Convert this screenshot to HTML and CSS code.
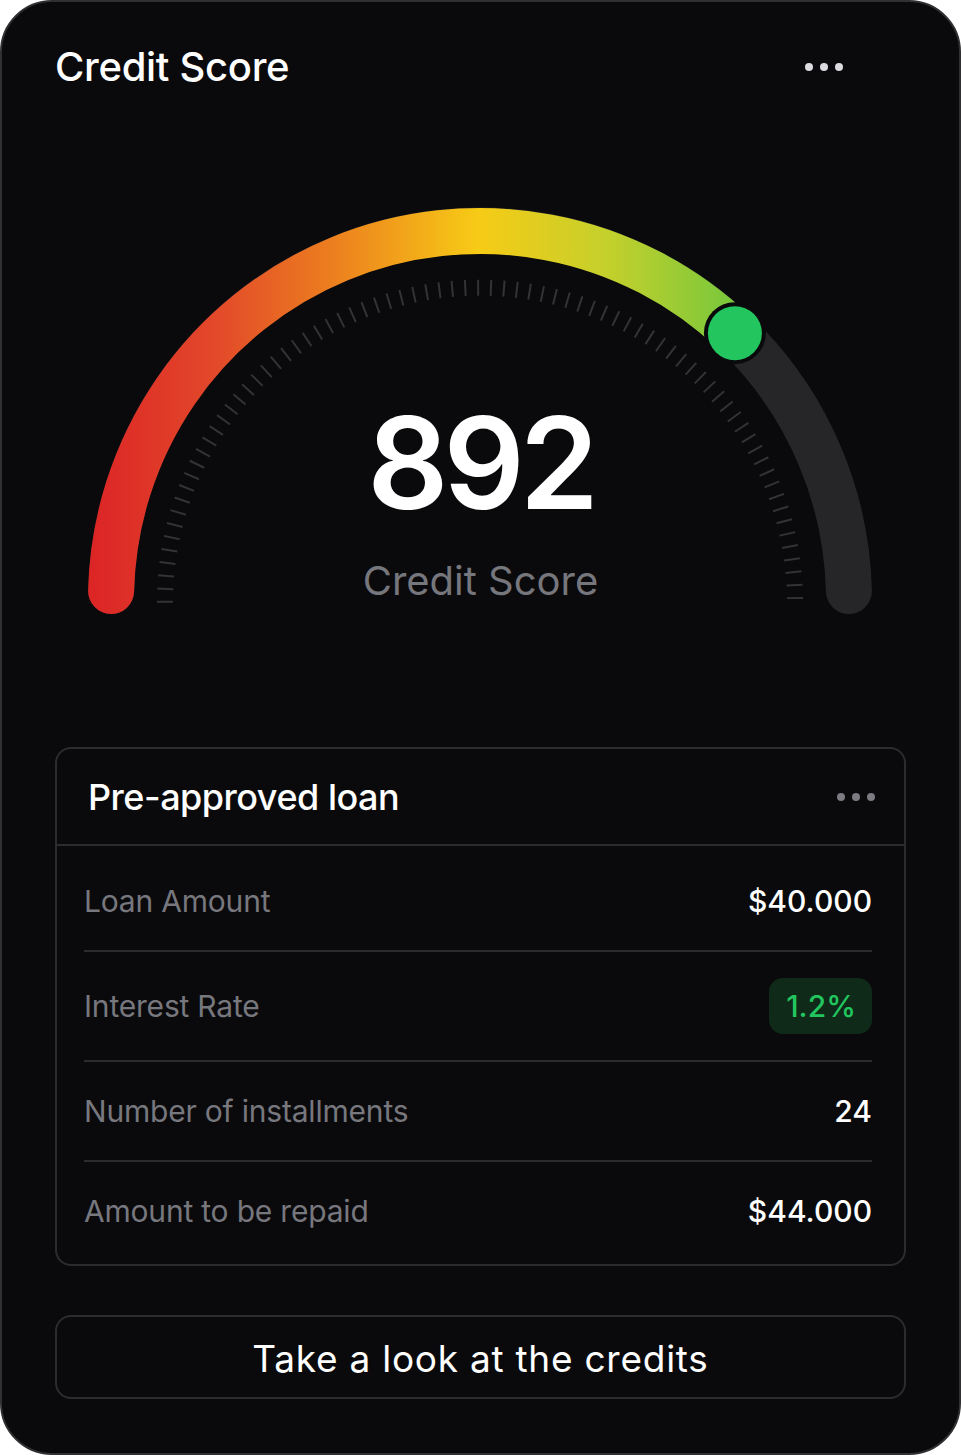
FILE: index.html
```html
<!DOCTYPE html>
<html lang="en">
<head>
<meta charset="utf-8">
<title>Credit Score</title>
<link rel="stylesheet" href="styles.css">
</head>
<body>
<main class="card">
  <header class="card-header">
    <h1 class="title">Credit Score</h1>
    <div class="dots dots-light" aria-label="More"><span></span><span></span><span></span></div>
  </header>

  <section class="gauge">
    <svg class="gauge-svg" width="851" height="460" viewBox="0 0 851 460" aria-hidden="true">
      <defs>
        <linearGradient id="scoreGrad" gradientUnits="userSpaceOnUse" x1="40" y1="0" x2="700" y2="0">
          <stop offset="0" stop-color="#dc2626"/>
          <stop offset="0.18" stop-color="#e2482a"/>
          <stop offset="0.36" stop-color="#ec7f1e"/>
          <stop offset="0.58" stop-color="#f7cb16"/>
          <stop offset="0.78" stop-color="#c3d02c"/>
          <stop offset="1" stop-color="#6cc63e"/>
        </linearGradient>
      </defs>
      <path class="ticks" d="M 110 421.7 A 315 315 0 0 1 740 421.7"/>
      <path class="track" d="M 56.1 410 A 369 369 0 0 1 793.9 410"/>
      <path class="progress" d="M 56.1 410 A 369 369 0 0 1 679.9 152.2"/>
      <circle cx="679.9" cy="152.2" r="31" fill="#0a0a0c"/>
      <circle cx="679.9" cy="152.2" r="27" fill="#22c55e"/>
    </svg>
    <div class="score">
      <div class="score-value">892</div>
      <div class="score-label">Credit Score</div>
    </div>
  </section>

  <section class="loan">
    <div class="loan-header">
      <h2 class="loan-title">Pre-approved loan</h2>
      <div class="dots dots-muted" aria-label="More"><span></span><span></span><span></span></div>
    </div>
    <div class="loan-rows">
      <div class="row row-first">
        <span class="row-label">Loan Amount</span>
        <span class="row-value">$40.000</span>
      </div>
      <div class="row row-badge">
        <span class="row-label">Interest Rate</span>
        <span class="badge">1.2%</span>
      </div>
      <div class="row row-third">
        <span class="row-label">Number of installments</span>
        <span class="row-value">24</span>
      </div>
      <div class="row row-last">
        <span class="row-label">Amount to be repaid</span>
        <span class="row-value">$44.000</span>
      </div>
    </div>
  </section>

  <button class="cta" type="button">Take a look at the credits</button>
</main>
</body>
</html>
```

FILE: styles.css
```css
* { box-sizing: border-box; }

html, body {
  margin: 0;
  padding: 0;
  background: #ffffff;
}

body {
  font-family: Inter, "Noto Sans", "Liberation Sans", sans-serif;
  color: #ffffff;
}

.card {
  width: 961px;
  height: 1455px;
  background: #0a0a0c;
  border: 2px solid #303032;
  border-radius: 52px;
  padding: 39px 53px 54px 53px;
  display: flex;
  flex-direction: column;
}

.card-header {
  display: flex;
  align-items: center;
  justify-content: space-between;
  height: 52px;
}

.title {
  margin: 0;
  font-size: 40px;
  line-height: 52px;
  font-weight: 500;
  letter-spacing: -0.3px;
  color: #ffffff;
}

.dots {
  display: flex;
  gap: 7px;
}

.dots span {
  width: 8px;
  height: 8px;
  border-radius: 50%;
}

.dots-light { margin-right: 63px; }
.dots-light span { background: #dcdce0; }
.dots-muted span { background: #7b7b82; }

.gauge {
  position: relative;
  height: 460px;
  margin-top: 88px;
}

.gauge-svg {
  display: block;
}

.ticks {
  fill: none;
  stroke: #333336;
  stroke-width: 16;
  stroke-dasharray: 2 10.94;
}

.track {
  fill: none;
  stroke: #262628;
  stroke-width: 46;
  stroke-linecap: round;
}

.progress {
  fill: none;
  stroke: url(#scoreGrad);
  stroke-width: 46;
  stroke-linecap: round;
}

.score {
  position: absolute;
  top: 219px;
  left: 0;
  right: 0;
  text-align: center;
}

.score-value {
  font-size: 127px;
  line-height: 127px;
  font-weight: 600;
  letter-spacing: -5px;
  color: #ffffff;
}

.score-label {
  margin-top: 34px;
  font-size: 40px;
  line-height: 40px;
  font-weight: 400;
  color: #76767d;
}

.loan {
  margin-top: 106px;
  border: 2px solid #2c2c2f;
  border-radius: 16px;
}

.loan-header {
  height: 97px;
  display: flex;
  align-items: center;
  justify-content: space-between;
  padding: 0 29px 0 31px;
  border-bottom: 2px solid #2c2c2f;
}

.loan-title {
  margin: 0;
  font-size: 36px;
  font-weight: 500;
  letter-spacing: -0.5px;
  color: #ffffff;
}

.loan-rows {
  padding: 0 32px 0 27px;
}

.row {
  display: flex;
  align-items: center;
  justify-content: space-between;
  padding: 26px 0;
  line-height: 48px;
  border-bottom: 2px solid #2c2c2f;
}

.row-first { padding-top: 31px; padding-bottom: 25px; }
.row-third { padding-top: 25px; padding-bottom: 25px; }
.row-last { padding-top: 25px; padding-bottom: 29px; border-bottom: none; }

.row-label {
  font-size: 30px;
  letter-spacing: -0.2px;
  color: #77777e;
}

.row-value {
  font-size: 30px;
  font-weight: 500;
  color: #ffffff;
}

.badge {
  height: 56px;
  line-height: 56px;
  padding: 0 16px 0 17px;
  border-radius: 14px;
  background: #0f2a19;
  color: #22c55e;
  font-size: 30px;
  font-weight: 500;
}

.cta {
  margin-top: 49px;
  height: 85px;
  width: 100%;
  background: transparent;
  border: 2px solid #2c2c2f;
  border-radius: 16px;
  color: #ffffff;
  font-family: Inter, "Noto Sans", "Liberation Sans", sans-serif;
  font-size: 37px;
  line-height: 1;
  padding: 2px 0 0;
  font-weight: 400;
  letter-spacing: 0.75px;
  cursor: pointer;
}
```
